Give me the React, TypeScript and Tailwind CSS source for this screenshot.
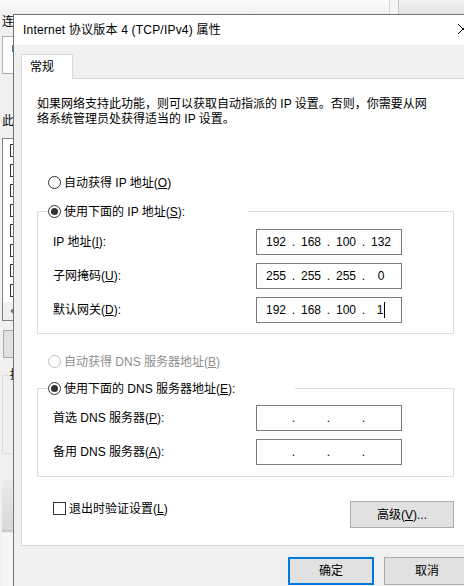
import type { ReactNode } from "react";

// Windows 10 "Internet 协议版本 4 (TCP/IPv4) 属性" dialog over the adapter properties window

function Radio({ checked = false, disabled = false }: { checked?: boolean; disabled?: boolean }) {
  return (
    <span
      className={
        "flex h-[13px] w-[13px] shrink-0 items-center justify-center rounded-full border bg-white " +
        (disabled ? "border-[#bcbcbc]" : "border-[#333333]")
      }
    >
      {checked && <span className="h-[7px] w-[7px] rounded-full bg-[#333333]" />}
    </span>
  );
}

function RadioRow({
  checked,
  disabled,
  children,
  className = "",
}: {
  checked?: boolean;
  disabled?: boolean;
  children: ReactNode;
  className?: string;
}) {
  return (
    <div className={"flex h-[17px] items-center gap-[3px] " + className}>
      <Radio checked={checked} disabled={disabled} />
      <span className={disabled ? "text-[#8e8e8e]" : ""}>{children}</span>
    </div>
  );
}

function IpBox({ parts, cursor = false }: { parts?: string[]; cursor?: boolean }) {
  const segs = parts ?? ["", "", "", ""];
  return (
    <div className="flex h-[26px] w-[146px] items-center border border-[#7a7a7a] bg-white pl-[5px]">
      {segs.map((p, i) => (
        <div key={i} className="flex items-center">
          <span className="flex w-[28px] items-center justify-center">
            {p}
            {cursor && i === 3 && <span className="ml-px h-[16px] w-px bg-black" />}
          </span>
          {i < 3 && <span className="w-[7px] text-center">.</span>}
        </div>
      ))}
    </div>
  );
}

function FieldRow({ label, children }: { label: ReactNode; children: ReactNode }) {
  return (
    <div className="flex items-center pl-[15px]">
      <span className="w-[203px]">{label}</span>
      {children}
    </div>
  );
}

function BackgroundWindow() {
  const rows = [true, true, true, true, false, true, true, true];
  return (
    <div className="flex h-full w-full flex-col">
      <div className="flex h-[14px] shrink-0">
        <div className="w-[389px] bg-gradient-to-b from-[#fcfcfc] to-[#f1f1f1]" />
        <div className="w-px bg-[#d6d6d6]" />
        <div className="w-[8px] bg-[#f4f4f4]" />
        <div className="w-px bg-[#c4c4c4]" />
        <div className="flex-1 bg-gradient-to-b from-[#f2f2f2] to-[#e3e3e3]" />
      </div>
      <div className="flex flex-1 flex-col bg-[#f0f0f0] pl-[2px]">
        {/* only the first glyph of each label peeks out from under the dialog */}
        <div className="leading-[16px]">连</div>
        <div className="mt-[6px] h-[38px] w-[300px] border border-[#adadad] bg-white pl-[9px] pt-[8px]">
          <div className="h-[7px] w-[4px] bg-[#3d7db5]" />
        </div>
        <div className="mt-[39px] leading-[16px]">此</div>
        <div className="mt-[9px] flex h-[183px] w-[300px] flex-col border border-[#828282] bg-white pt-[1px]">
          {rows.map((on, i) => (
            <div key={i} className="flex h-[20px] items-center pl-[7px]">
              <span className="flex h-[13px] w-[13px] items-center justify-center border border-[#333333]">
                {on && <span className="h-[5px] w-[3px] bg-[#222222]" />}
              </span>
            </div>
          ))}
          <div className="mt-auto flex h-[18px] items-center bg-[#f0f0f0] pl-[7px]">
            <svg width="6" height="8" viewBox="0 0 6 8">
              <path d="M5 0.5 L1.5 4 L5 7.5" fill="none" stroke="#606060" strokeWidth="1.5" />
            </svg>
          </div>
        </div>
        <div className="ml-px mt-[9px] h-[28px] w-[80px] border border-[#adadad] bg-[#e1e1e1]" />
        <div className="mt-[17px] h-[79px] w-[300px] border border-[#dcdcdc]">
          <span className="-mt-[9px] ml-[7px] block w-fit bg-[#f0f0f0] leading-[16px]">描</span>
        </div>
        <div className="mt-[26px] h-[50px] w-[300px] bg-gradient-to-b from-[#ebebeb] to-[#d8d8d8]" />
        <div className="h-[3px] w-[300px] bg-gradient-to-b from-[#b8b8b8] to-[#f0f0f0]" />
        <div className="flex-1 bg-[#f6f6f6]" />
      </div>
    </div>
  );
}

export default function App() {
  return (
    <div className="relative h-[586px] w-[464px] overflow-hidden bg-[#f0f0f0] font-['Liberation_Sans','Noto_Sans_CJK_SC',sans-serif] text-[12px] text-black">
      <BackgroundWindow />

      <div className="absolute left-[13px] top-[14px] flex h-[600px] w-[473px] flex-col border-l border-t border-[#747474] bg-[#f0f0f0]">
        {/* title bar */}
        <div className="flex h-[30px] shrink-0 items-center justify-between bg-white">
          <span className="pl-[9px] tracking-[0.2px]">Internet 协议版本 4 (TCP/IPv4) 属性</span>
          <div className="flex h-[30px] w-[46px] items-center justify-center pb-[2px]">
            <svg width="10" height="10" viewBox="0 0 10 10">
              <path d="M0 0 L10 10 M10 0 L0 10" stroke="#000" strokeWidth="1" />
            </svg>
          </div>
        </div>

        <div className="flex flex-col px-[7px] pt-[9px]">
          {/* tab */}
          <div className="relative z-10 -mb-px flex h-[25px] w-[52px] items-center border border-b-0 border-[#d9d9d9] bg-white pb-[1px] pl-[8px]">
            常规
          </div>

          <div className="flex h-[468px] flex-col border border-[#d9d9d9] bg-white pl-[15px] pt-[18px]">
            <div className="flex flex-col">
              <span className="h-[15px] leading-[15px]">
                如果网络支持此功能，则可以获取自动指派的 IP 设置。否则，你需要从网
              </span>
              <span className="h-[15px] leading-[15px]">络系统管理员处获得适当的 IP 设置。</span>
            </div>

            <RadioRow className="ml-[11px] mt-[47px]">
              自动获得 IP 地址(<u>O</u>)
            </RadioRow>

            <div className="mt-[20px] flex w-[417px] flex-col border border-[#dcdcdc] pb-[10px]">
              <RadioRow checked className="-mt-[9px] ml-[10px] w-[200px] bg-white">
                使用下面的 IP 地址(<u>S</u>):
              </RadioRow>
              <div className="mt-[9px] flex flex-col gap-[8px]">
                <FieldRow label={<>IP 地址(<u>I</u>):</>}>
                  <IpBox parts={["192", "168", "100", "132"]} />
                </FieldRow>
                <FieldRow label={<>子网掩码(<u>U</u>):</>}>
                  <IpBox parts={["255", "255", "255", "0"]} />
                </FieldRow>
                <FieldRow label={<>默认网关(<u>D</u>):</>}>
                  <IpBox parts={["192", "168", "100", "1"]} cursor />
                </FieldRow>
              </div>
            </div>

            <RadioRow disabled className="ml-[11px] mt-[19px]">
              自动获得 DNS 服务器地址(<u>B</u>)
            </RadioRow>

            <div className="mt-[18px] flex w-[417px] flex-col border border-[#dcdcdc] pb-[11px]">
              <RadioRow checked className="-mt-[9px] ml-[10px] w-[247px] bg-white">
                使用下面的 DNS 服务器地址(<u>E</u>):
              </RadioRow>
              <div className="mt-[8px] flex flex-col gap-[8px]">
                <FieldRow label={<>首选 DNS 服务器(<u>P</u>):</>}>
                  <IpBox />
                </FieldRow>
                <FieldRow label={<>备用 DNS 服务器(<u>A</u>):</>}>
                  <IpBox />
                </FieldRow>
              </div>
            </div>

            <div className="mt-[24px] flex w-[417px] items-start justify-between">
              <div className="ml-[16px] mt-[1px] flex h-[13px] items-center gap-[3px]">
                <span className="h-[13px] w-[13px] border border-[#333333] bg-white" />
                <span>退出时验证设置(<u>L</u>)</span>
              </div>
              <button className="h-[27px] w-[104px] border border-[#adadad] bg-[#e1e1e1]">
                高级(<u>V</u>)...
              </button>
            </div>
          </div>

          <div className="mt-[11px] flex justify-end gap-[10px] pr-[9px]">
            <button className="h-[28px] w-[86px] border-2 border-[#0078d7] bg-[#e1e1e1]">确定</button>
            <button className="h-[28px] w-[86px] border border-[#adadad] bg-[#e1e1e1]">取消</button>
          </div>
        </div>
      </div>
    </div>
  );
}
